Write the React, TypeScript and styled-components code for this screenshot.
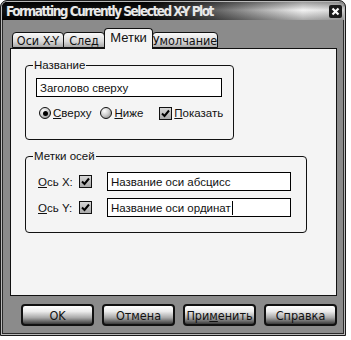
import React from "react";
import styled, { createGlobalStyle } from "styled-components";

const Global = createGlobalStyle`
  body {
    margin: 0;
    background: #ffffff;
    font-family: "Liberation Sans", Arial, sans-serif;
  }
`;

const Window = styled.div`
  box-sizing: border-box;
  width: 346px;
  height: 336px;
  border: 1px solid #1a1a1a;
  border-radius: 7px 7px 0 0;
  background: #8b8b8b;
  padding: 1px;
  box-shadow: inset 0 0 0 1px #b9b9b9, inset 0 0 0 2px #2a2a2a;
  display: flex;
  flex-direction: column;
`;

const TitleBar = styled.div`
  height: 18px;
  display: flex;
  align-items: center;
  justify-content: space-between;
  border-radius: 5px 5px 0 0;
  overflow: hidden;
  background: linear-gradient(
      to bottom,
      rgba(0, 0, 0, 0.35) 0%,
      rgba(255, 255, 255, 0.08) 45%,
      rgba(0, 0, 0, 0.3) 100%
    ),
    linear-gradient(to right, #000 0%, #000 42%, #555 62%, #f2f2f2 88%, #cfcfcf 100%);
`;

const TitleText = styled.div`
  margin: -1px 0 0 4px;
  font-family: "DejaVu Sans Condensed", "DejaVu Sans", sans-serif;
  font-weight: 700;
  font-size: 13.5px;
  line-height: 18px;
  letter-spacing: -1.5px;
  color: #e8e8e8;
  white-space: nowrap;
`;

const CloseBox = styled.div`
  width: 13px;
  height: 13px;
  margin-right: 2px;
  background: #1b1b1b;
  border-radius: 2px;
  display: flex;
  align-items: center;
  justify-content: center;
`;

const Body = styled.div`
  flex: 1;
  display: flex;
  flex-direction: column;
  padding: 8px 7px 0 8px;
`;

const TabRow = styled.div`
  display: flex;
  align-items: flex-end;
  height: 20px;
  margin-left: 2px;
`;

const Tab = styled.div<{ $active?: boolean; $w: number }>`
  box-sizing: border-box;
  width: ${(p) => p.$w}px;
  height: ${(p) => (p.$active ? 21 : 16)}px;
  margin-right: -1px;
  margin-bottom: ${(p) => (p.$active ? -1 : 0)}px;
  position: relative;
  z-index: ${(p) => (p.$active ? 2 : 1)};
  border: 1px solid #111;
  border-bottom: ${(p) => (p.$active ? "none" : "1px solid #111")};
  border-radius: 4px 4px 0 0;
  background: ${(p) =>
    p.$active ? "#f4f4f4" : "linear-gradient(to bottom, #fafafa 0%, #d8d8d8 60%, #a8a8a8 100%)"};
  display: flex;
  align-items: center;
  justify-content: center;
  font-family: ${(p) =>
    p.$active ? `"Liberation Sans", Arial, sans-serif` : `"DejaVu Sans Condensed", sans-serif`};
  font-size: ${(p) => (p.$active ? 13 : 12.5)}px;
  color: #111;
  padding-bottom: ${(p) => (p.$active ? 3 : 0)}px;
`;

const Panel = styled.div`
  box-sizing: border-box;
  height: 248px;
  border: 1px solid #111;
  background: #f4f4f4;
  padding: 16px 0 0 14px;
  display: flex;
  flex-direction: column;
  gap: 16px;
`;

const Group = styled.div<{ $w: number; $h: number }>`
  box-sizing: border-box;
  width: ${(p) => p.$w}px;
  height: ${(p) => p.$h}px;
  border: 1px solid #111;
  border-radius: 4px;
  padding: 0 10px;
  display: flex;
  flex-direction: column;
  font-size: 11.5px;
  color: #111;
`;

const Legend = styled.div`
  align-self: flex-start;
  margin: -8px 0 0 -3px;
  padding: 0 1px;
  line-height: 15px;
  background: #f4f4f4;
`;

const TextBox = styled.div<{ $w: number }>`
  box-sizing: border-box;
  width: ${(p) => p.$w}px;
  height: 19px;
  border: 1px solid #000;
  background: #fff;
  padding: 0 3px;
  display: flex;
  align-items: center;
  white-space: nowrap;
`;

const Caret = styled.span`
  display: inline-block;
  width: 1px;
  height: 14px;
  background: #000;
  margin-left: 1px;
`;

const OptionRow = styled.div`
  display: flex;
  align-items: center;
  height: 14px;
  margin: 9px 0 0 3px;
`;

const Option = styled.div<{ $gap: number }>`
  display: flex;
  align-items: center;
  gap: 2px;
  margin-right: ${(p) => p.$gap}px;
`;

const Radio = styled.div<{ $on?: boolean }>`
  box-sizing: border-box;
  width: 12px;
  height: 12px;
  border-radius: 50%;
  border: 1px solid #111;
  background: radial-gradient(circle at 35% 30%, #ffffff 0%, #d0d0d0 45%, #7a7a7a 100%);
  display: flex;
  align-items: center;
  justify-content: center;
  &::after {
    content: "";
    display: ${(p) => (p.$on ? "block" : "none")};
    width: 5px;
    height: 5px;
    border-radius: 50%;
    background: #000;
  }
`;

const Check = styled.div`
  box-sizing: border-box;
  width: 13px;
  height: 13px;
  border: 1px solid #111;
  background: linear-gradient(to bottom, #d6d6d6, #a9a9a9);
  display: flex;
  align-items: center;
  justify-content: center;
`;

const U = styled.span`
  text-decoration: underline;
`;

const AxisRow = styled.div`
  display: flex;
  align-items: center;
  margin: 8px 0 0 2px;
  & + & {
    margin-top: 7px;
  }
`;

const AxisLabel = styled.div`
  width: 41px;
`;

const AxisCheckWrap = styled.div`
  width: 28px;
`;

const ButtonRow = styled.div`
  display: flex;
  gap: 8px;
  margin: 8px 0 0 11px;
`;

const Button = styled.div`
  box-sizing: border-box;
  width: 73px;
  height: 22px;
  border: 2px solid #111;
  border-radius: 4px;
  background: linear-gradient(to bottom, #ffffff 0%, #ececec 30%, #a8a8a8 65%, #3a3a3a 100%);
  display: flex;
  align-items: center;
  justify-content: center;
  font-family: "DejaVu Sans Condensed", sans-serif;
  font-size: 12.5px;
  color: #111;
`;

const CheckMark = () => (
  <svg width="9" height="9" viewBox="0 0 9 9">
    <path d="M1 4.5 L3.5 7 L8 1.5" fill="none" stroke="#000" strokeWidth="2" />
  </svg>
);

export default function App() {
  return (
    <>
      <Global />
      <Window>
        <TitleBar>
          <TitleText>Formatting Currently Selected X-Y Plot</TitleText>
          <CloseBox>
            <svg width="9" height="9" viewBox="0 0 9 9">
              <path d="M1.5 1.5 L7.5 7.5 M7.5 1.5 L1.5 7.5" stroke="#fff" strokeWidth="2.2" />
            </svg>
          </CloseBox>
        </TitleBar>
        <Body>
          <TabRow>
            <Tab $w={52}>Оси X-Y</Tab>
            <Tab $w={42}>След</Tab>
            <Tab $w={49} $active>
              Метки
            </Tab>
            <Tab $w={66}>Умолчание</Tab>
          </TabRow>
          <Panel>
            <Group $w={209} $h={75}>
              <Legend>Название</Legend>
              <TextBox $w={186} style={{ marginTop: 5 }}>
                Заголово сверху
              </TextBox>
              <OptionRow>
                <Option $gap={9}>
                  <Radio $on />
                  <span>
                    <U>С</U>верху
                  </span>
                </Option>
                <Option $gap={16}>
                  <Radio />
                  <span>
                    <U>Н</U>иже
                  </span>
                </Option>
                <Option $gap={0}>
                  <Check>
                    <CheckMark />
                  </Check>
                  <span>
                    <U>П</U>оказать
                  </span>
                </Option>
              </OptionRow>
            </Group>
            <Group $w={282} $h={77}>
              <Legend>Метки осей</Legend>
              <AxisRow>
                <AxisLabel>
                  <U>О</U>сь X:
                </AxisLabel>
                <AxisCheckWrap>
                  <Check>
                    <CheckMark />
                  </Check>
                </AxisCheckWrap>
                <TextBox $w={184}>Название оси абсцисс</TextBox>
              </AxisRow>
              <AxisRow>
                <AxisLabel>
                  <U>О</U>сь Y:
                </AxisLabel>
                <AxisCheckWrap>
                  <Check>
                    <CheckMark />
                  </Check>
                </AxisCheckWrap>
                <TextBox $w={184}>
                  Название оси ординат
                  <Caret />
                </TextBox>
              </AxisRow>
            </Group>
          </Panel>
          <ButtonRow>
            <Button>OK</Button>
            <Button>Отмена</Button>
            <Button>
              При<U>м</U>енить
            </Button>
            <Button>Справка</Button>
          </ButtonRow>
        </Body>
      </Window>
    </>
  );
}
